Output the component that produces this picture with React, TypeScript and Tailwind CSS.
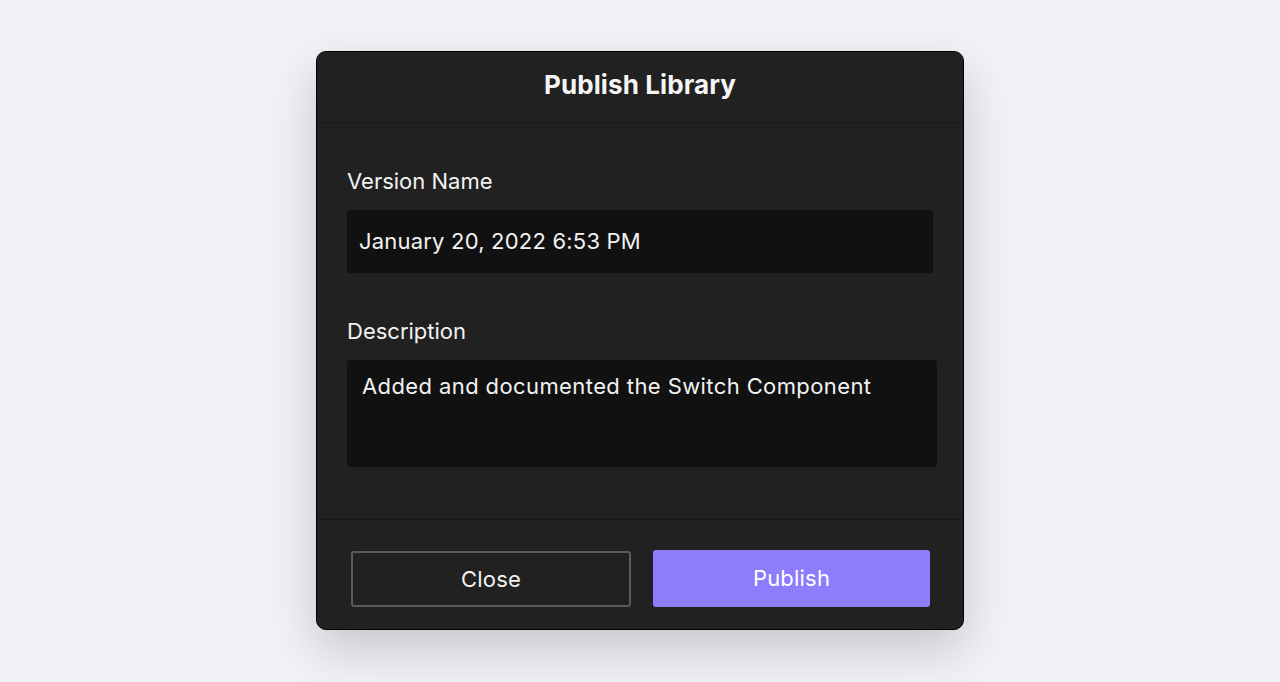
export default function App() {
  return (
    <div className="flex h-[682px] w-full justify-center bg-[#f1f2f6] pt-[51px] font-['Inter','Liberation_Sans',sans-serif]">
      <div className="flex h-[579px] w-[648px] flex-col overflow-hidden rounded-[10px] border border-black bg-[#212121] shadow-[0_20px_50px_rgba(0,0,0,0.18)]">
        <div className="flex h-[71px] shrink-0 items-center justify-center border-b border-[#191919] pb-[6px]">
          <h1 className="text-[26px] font-bold tracking-[0.1px] text-[#f5f5f5]">Publish Library</h1>
        </div>

        <div className="flex flex-1 flex-col pl-[30px] pr-[29px] pt-[46px]">
          <label className="mb-[17px] text-[22px] leading-6 text-[#f2f2f2]">Version Name</label>
          <div className="flex h-[63px] w-[586px] items-center rounded-[3px] bg-[#111111] px-[12px] text-[22px] tracking-[0.2px] text-[#f2f2f2]">
            January 20, 2022 6:53 PM
          </div>

          <label className="mb-[17px] mt-[46px] text-[22px] leading-6 text-[#f2f2f2]">Description</label>
          <div className="h-[107px] w-[590px] rounded-[3px] bg-[#111111] px-[15px] pt-[14px] text-[22px] leading-6 tracking-[0.4px] text-[#f2f2f2]">
            Added and documented the Switch Component
          </div>
        </div>

        <div className="flex h-[110px] shrink-0 items-start gap-[22px] border-t border-[#191919] pl-[34px] pt-[30px]">
          <button className="mt-[1px] h-[56px] w-[280px] rounded-[3px] border-2 border-[#5a5a5a] text-[22px] tracking-[0.2px] text-[#f2f2f2]">
            Close
          </button>
          <button className="h-[57px] w-[277px] rounded-[3px] bg-[#8d7dfc] text-[22px] tracking-[0.2px] text-white">
            Publish
          </button>
        </div>
      </div>
    </div>
  )
}
